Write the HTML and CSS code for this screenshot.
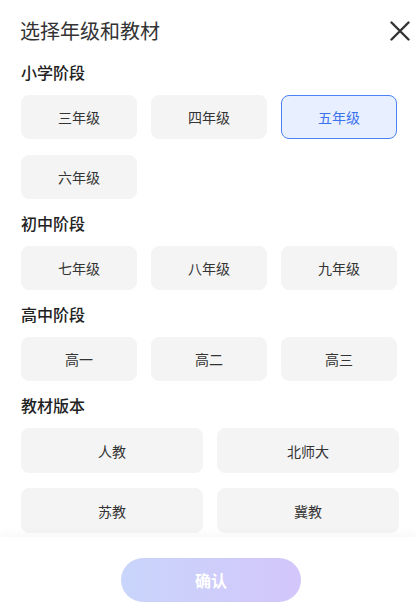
FILE: index.html
```html
<!DOCTYPE html>
<html lang="zh-CN">
<head>
    <meta charset="UTF-8">
    <meta name="viewport" content="width=device-width, initial-scale=1.0">
    <title>选择年级和教材</title>
    <link rel="stylesheet" href="styles.css">
</head>
<body>
    <div class="sheet">
        <!-- 标题栏 -->
        <div class="header">
            <h1 class="title">选择年级和教材</h1>
            <span class="close">
                <svg width="20" height="20" viewBox="0 0 20 20">
                    <path d="M1.5 1.5 L18.5 18.5 M18.5 1.5 L1.5 18.5" stroke="#333" stroke-width="2.4" stroke-linecap="round" fill="none"/>
                </svg>
            </span>
        </div>

        <!-- 可滚动内容 -->
        <div class="content">
            <div class="section">
                <div class="label">小学阶段</div>
                <div class="grid grade">
                    <div class="opt">三年级</div>
                    <div class="opt">四年级</div>
                    <div class="opt active">五年级</div>
                    <div class="opt">六年级</div>
                </div>
            </div>

            <div class="section">
                <div class="label">初中阶段</div>
                <div class="grid grade">
                    <div class="opt">七年级</div>
                    <div class="opt">八年级</div>
                    <div class="opt">九年级</div>
                </div>
            </div>

            <div class="section">
                <div class="label">高中阶段</div>
                <div class="grid grade">
                    <div class="opt">高一</div>
                    <div class="opt">高二</div>
                    <div class="opt">高三</div>
                </div>
            </div>

            <div class="section">
                <div class="label">教材版本</div>
                <div class="grid book">
                    <div class="opt">人教</div>
                    <div class="opt">北师大</div>
                    <div class="opt">苏教</div>
                    <div class="opt">冀教</div>
                </div>
            </div>
        </div>

        <!-- 底部按钮 -->
        <div class="footer">
            <button class="confirm">确认</button>
        </div>
    </div>
</body>
</html>
```

FILE: styles.css
```css
/* 全局 */
html, body {
    margin: 0;
    padding: 0;
    height: 100%;
    background: #fff;
    font-family: "Noto Sans CJK SC", "Noto Sans", sans-serif;
    color: #333;
    overflow: hidden;
}

.sheet {
    display: flex;
    flex-direction: column;
    height: 100vh;
}

/* 标题栏 */
.header {
    display: flex;
    align-items: center;
    justify-content: space-between;
    padding: 17px 7px 0 20px;
}

.title {
    margin: 0;
    font-size: 20px;
    line-height: 28px;
    font-weight: 400;
    color: #333;
}

.close {
    display: flex;
    width: 20px;
    height: 20px;
}

/* 内容 */
.content {
    flex: 1;
    overflow: hidden;
    padding: 0 20px 0 21px;
}

.section {
    margin-top: 13px;
}

.section:first-child {
    margin-top: 16px;
}

.label {
    font-size: 16px;
    line-height: 22px;
    font-weight: 500;
    color: #222;
    margin-bottom: 12px;
}

.grid {
    display: grid;
    column-gap: 14px;
}

.grade {
    grid-template-columns: repeat(3, 116px);
    row-gap: 16px;
}

.book {
    grid-template-columns: repeat(2, 182px);
    row-gap: 15px;
}

.opt {
    height: 44px;
    box-sizing: border-box;
    display: flex;
    align-items: center;
    justify-content: center;
    background: #f4f4f4;
    border: 1px solid #f4f4f4;
    border-radius: 8px;
    font-size: 14px;
    color: #333;
}

.book .opt {
    height: 45px;
}

.opt.active {
    background: #e8effe;
    border-color: #4a82f6;
    color: #3a72f0;
}

/* 底部 */
.footer {
    height: 75px;
    flex-shrink: 0;
    display: flex;
    justify-content: center;
    align-items: flex-start;
    padding-left: 5px;
    background: #fff;
    box-shadow: 0 -4px 8px rgba(0, 0, 0, 0.03);
}

.confirm {
    margin-top: 21px;
    width: 180px;
    height: 44px;
    border: none;
    border-radius: 22px;
    background: linear-gradient(90deg, #c9d5fb, #d3c6fa);
    color: #fff;
    font-family: inherit;
    font-size: 16px;
    font-weight: 700;
}
```
